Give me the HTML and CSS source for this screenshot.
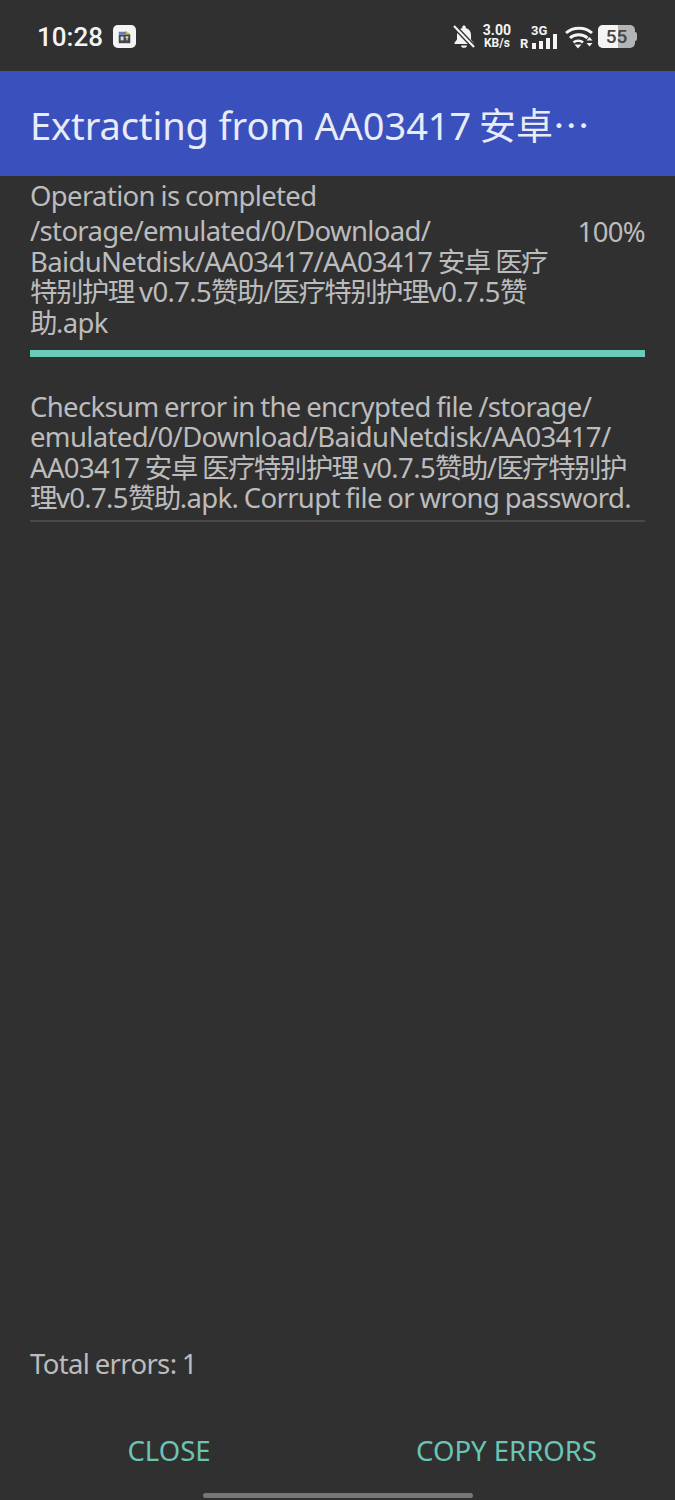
FILE: index.html
```html
<!DOCTYPE html>
<html lang="en">
<head>
    <meta charset="UTF-8">
    <meta name="viewport" content="width=device-width, initial-scale=1.0">
    <title>Extracting</title>
    <link rel="stylesheet" href="styles.css">
</head>
<body>
    <div class="screen">
        <!-- Status bar -->
        <div class="status-bar">
            <div class="status-left">
                <span class="clock">10:28</span>
                <svg class="app-icon" width="23" height="23" viewBox="0 0 24 24">
                    <rect width="24" height="24" rx="5" fill="#f4f4f4"/>
                    <path d="M6 7h8l2 3H6z" fill="#5b7fc0"/>
                    <path d="M13 6l5 3v2h-4z" fill="#d9b64a"/>
                    <rect x="6" y="10" width="12" height="9" fill="#45474c"/>
                    <rect x="8" y="12" width="3" height="4" fill="#ddd"/>
                    <rect x="13" y="12" width="3" height="1.5" fill="#ddd"/>
                    <rect x="14" y="12" width="1.2" height="4" fill="#ddd"/>
                </svg>
            </div>
            <div class="status-right">
                <svg class="bell" width="22" height="23" viewBox="0 0 22 23">
                    <path d="M11 0.500c1 0 1.700.7 1.700 1.600v.8c3.500.8 5.300 3.600 5.300 7v4.600l2.500 3.200v1.300H1.500v-1.300L4 14.500V9.900c0-3.400 1.800-6.200 5.300-7v-.8C9.300 1.200 10 .5 11 .5z" fill="#f4f4f4"/>
                    <path d="M8 20.500h6c0 1.400-1.300 2.300-3 2.300s-3-.9-3-2.300z" fill="#f4f4f4"/>
                    <path d="M0 0l22 23" stroke="#303031" stroke-width="5"/>
                    <path d="M1 1l20 21" stroke="#f4f4f4" stroke-width="2.200"/>
                </svg>
                <div class="speed">
                    <span class="speed-num">3.00</span>
                    <span class="speed-unit">KB/s</span>
                </div>
                <div class="signal">
                    <span class="net">3G</span>
                    <span class="roam">R</span>
                    <span class="bar b1"></span>
                    <span class="bar b2"></span>
                    <span class="bar b3"></span>
                    <span class="bar b4"></span>
                </div>
                <svg class="wifi" width="28" height="24" viewBox="0 0 28 24">
                    <path d="M1 8c7-6.500 19-6.500 26 0" fill="none" stroke="#f4f4f4" stroke-width="3"/>
                    <path d="M5 13c4.500-4.200 13-4.200 17.500 0" fill="none" stroke="#f4f4f4" stroke-width="3"/>
                    <path d="M8.500 17.500c2.500-2.300 7-2.300 9.500 0" fill="none" stroke="#f4f4f4" stroke-width="2.600"/>
                    <path d="M9.500 19.500h7l-3.500 4z" fill="#f4f4f4"/>
                    <path d="M21.500 15.500h6l-3-3.500zM21.500 18h6l-3 3.500z" fill="#f4f4f4"/>
                </svg>
                <div class="battery">
                    <div class="battery-body">
                        <div class="battery-level"></div>
                        <span class="battery-num">55</span>
                    </div>
                    <div class="battery-tip"></div>
                </div>
            </div>
        </div>

        <!-- Toolbar -->
        <div class="toolbar">
            <h1 class="toolbar-title">Extracting from AA03417<span class="title-cjk">安卓⋯</span></h1>
        </div>

        <!-- Content -->
        <div class="content">
            <p class="operation">Operation is completed</p>
            <div class="file-row">
                <p class="file-path">/storage/emulated/0/Download/<br>BaiduNetdisk/AA03417/AA03417 <span class="cjk">安卓</span> <span class="cjk">医疗</span><br><span class="cjk">特别护理</span> v0.7.5<span class="cjk">赞助</span>/<span class="cjk">医疗特别护理</span>v0.7.5<span class="cjk">赞</span><br><span class="cjk">助</span>.apk</p>
                <span class="percent">100%</span>
            </div>
            <div class="progress"></div>
            <p class="error-text">Checksum error in the encrypted file /storage/<br>emulated/0/Download/BaiduNetdisk/AA03417/<br>AA03417 <span class="cjk">安卓</span> <span class="cjk">医疗特别护理</span> v0.7.5<span class="cjk">赞助</span>/<span class="cjk">医疗特别护</span><br><span class="cjk">理</span>v0.7.5<span class="cjk">赞助</span>.apk. Corrupt file or wrong password.</p>
            <div class="divider"></div>
            <div class="spacer"></div>
            <p class="total">Total errors: 1</p>
        </div>

        <!-- Buttons -->
        <div class="buttons">
            <button class="btn">CLOSE</button>
            <button class="btn">COPY ERRORS</button>
        </div>
        <div class="nav-handle"></div>
    </div>
</body>
</html>
```

FILE: styles.css
```css
* {
    box-sizing: border-box;
}

body {
    margin: 0;
    background-color: #303031;
    font-family: 'Noto Sans', 'Noto Sans CJK SC', sans-serif;
}

p {
    margin: 0;
}

.screen {
    display: flex;
    flex-direction: column;
    height: 1500px;
    overflow: hidden;
    background-color: #303031;
    color: #bcbcbc;
}

/* Status bar */
.status-bar {
    display: flex;
    justify-content: space-between;
    align-items: center;
    height: 71px;
    padding: 2px 38px 0 37px;
    color: #f4f4f4;
}

.status-left {
    display: flex;
    align-items: center;
    gap: 10px;
}

.clock {
    font-family: 'Roboto', sans-serif;
    font-size: 26px;
    font-weight: 500;
}

.status-right {
    display: flex;
    align-items: center;
}

.bell {
    margin-right: 8px;
}

.speed {
    display: flex;
    flex-direction: column;
    align-items: center;
    font-family: 'Roboto', sans-serif;
    font-weight: 700;
    margin-right: 9px;
}

.speed-num {
    font-size: 14px;
    line-height: 13px;
}

.speed-unit {
    font-size: 12px;
    line-height: 12px;
}

.signal {
    position: relative;
    display: flex;
    align-items: flex-end;
    gap: 2.500px;
    width: 37px;
    height: 24px;
    font-family: 'Roboto', sans-serif;
    font-weight: 700;
    margin-right: 8px;
}

.net {
    position: absolute;
    left: 11px;
    top: 0;
    font-size: 13px;
    line-height: 12px;
}

.roam {
    font-size: 13px;
    line-height: 11px;
    margin-right: 1px;
}

.bar {
    width: 4.500px;
    background-color: #f4f4f4;
}

.b1 { height: 6px; }
.b2 { height: 8px; }
.b3 { height: 11px; }
.b4 { height: 15px; }

.wifi {
    margin-right: 5px;
}

.battery {
    display: flex;
    align-items: center;
}

.battery-body {
    position: relative;
    width: 37px;
    height: 23px;
    border-radius: 5px;
    overflow: hidden;
    background-color: #b4b4b4;
}

.battery-level {
    width: 55%;
    height: 100%;
    background-color: #f4f4f4;
}

.battery-num {
    position: absolute;
    top: 0;
    left: 0;
    width: 100%;
    text-align: center;
    font-family: 'Roboto', sans-serif;
    font-size: 19px;
    font-weight: 500;
    line-height: 23px;
    color: #444;
}

.battery-tip {
    width: 2px;
    height: 9px;
    border-radius: 0 2px 2px 0;
    background-color: #b4b4b4;
}

/* Toolbar */
.toolbar {
    display: flex;
    align-items: center;
    height: 105px;
    padding: 0 30px;
    background-color: #3a50bd;
}

.toolbar-title {
    margin: 0;
    font-size: 38px;
    font-weight: 400;
    letter-spacing: -0.100px;
    color: #e8ebf8;
    white-space: nowrap;
}

.title-cjk {
    margin-left: 8px;
    font-size: 37px;
}

/* Content */
.content {
    flex: 1;
    display: flex;
    flex-direction: column;
    padding: 0 30px;
    font-size: 27.500px;
    letter-spacing: -0.650px;
    word-spacing: -1px;
}

.cjk {
    display: inline-block;
    letter-spacing: -1.600px;
}

.operation {
    margin-top: 2px;
    line-height: 36px;
}

.file-row {
    display: flex;
    justify-content: space-between;
    align-items: flex-start;
}

.file-path {
    margin-top: 2px;
    line-height: 30.500px;
    white-space: nowrap;
}

.percent {
    line-height: 36px;
}

.progress {
    height: 7px;
    margin-top: 12px;
    background-color: #6bcbbb;
}

.error-text {
    margin-top: 35px;
    line-height: 30.300px;
    white-space: nowrap;
}

.divider {
    height: 2px;
    margin-top: 7px;
    background-color: #484848;
}

.spacer {
    flex: 1;
}

.total {
    margin-bottom: 40px;
    line-height: 36px;
}

/* Buttons */
.buttons {
    display: grid;
    grid-template-columns: 338px 337px;
    height: 71px;
    padding-bottom: 15px;
}

.btn {
    padding: 0;
    border: none;
    background: none;
    color: #6bc5b4;
    font-family: inherit;
    font-size: 27.500px;
}

.nav-handle {
    align-self: center;
    width: 270px;
    height: 5px;
    margin-bottom: 2px;
    border-radius: 3px;
    background-color: #777;
}
```
